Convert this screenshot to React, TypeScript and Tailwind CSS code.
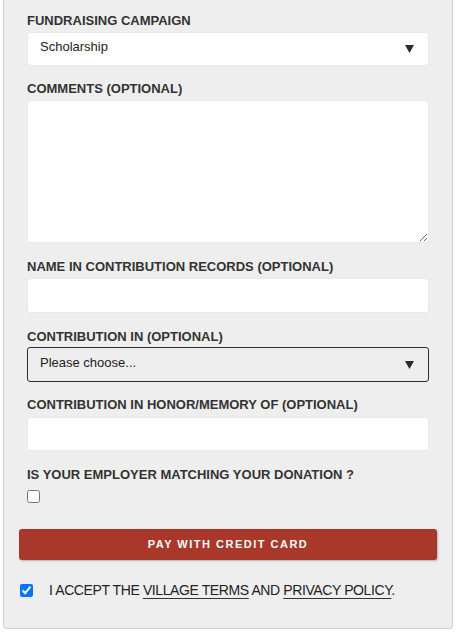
import React from "react";

const font = { fontFamily: '"Liberation Sans", Arial, Helvetica, sans-serif' };

function Arrow() {
  return (
    <svg width="9" height="8" viewBox="0 0 9 8" className="shrink-0">
      <polygon points="0,0 9,0 4.5,8" fill="#2b2b2b" />
    </svg>
  );
}

function Label({ children, className = "" }: { children: React.ReactNode; className?: string }) {
  return (
    <label className={`block text-[13px] leading-[15px] font-bold text-[#333] ${className}`}>
      {children}
    </label>
  );
}

export default function App() {
  return (
    <div className="w-[458px] h-[632px] bg-white pl-[3px] pr-[5px]" style={font}>
      <form className="flex flex-col bg-[#eeeeee] border-x border-b border-[#cfcfcf] rounded-b-[4px] px-[23px] pt-[13px] pb-[30px]">
        <Label>FUNDRAISING CAMPAIGN</Label>
        <div className="mt-[4px] h-[34px] flex items-center justify-between bg-white border border-[#e9e9e9] rounded-[3px] pl-[12px] pr-[14px]">
          <span className="mb-[4px] text-[13px] text-[#222]">Scholarship</span>
          <Arrow />
        </div>

        <Label className="mt-[15px]">COMMENTS (OPTIONAL)</Label>
        <textarea className="mt-[4px] h-[143px] w-full bg-white border border-[#e9e9e9] rounded-[3px] outline-none text-[13px] p-2 block" />

        <Label className="mt-[16px]">NAME IN CONTRIBUTION RECORDS (OPTIONAL)</Label>
        <input type="text" className="mt-[4px] h-[35px] w-full bg-white border border-[#e9e9e9] rounded-[3px] outline-none text-[13px] px-3 block" />

        <Label className="mt-[16px]">CONTRIBUTION IN (OPTIONAL)</Label>
        <div className="mt-[3px] h-[35px] flex items-center justify-between border border-[#2f2f2f] rounded-[3px] pl-[12px] pr-[14px]">
          <span className="mb-[4px] text-[13px] text-[#222]">Please choose...</span>
          <Arrow />
        </div>

        <Label className="mt-[15px]">CONTRIBUTION IN HONOR/MEMORY OF (OPTIONAL)</Label>
        <input type="text" className="mt-[5px] h-[34px] w-full bg-white border border-[#e9e9e9] rounded-[3px] outline-none text-[13px] px-3 block" />

        <Label className="mt-[16px]">IS YOUR EMPLOYER MATCHING YOUR DONATION ?</Label>
        <input type="checkbox" className="mt-[8px] m-0 w-[13px] h-[13px] block" />

        <button
          type="button"
          className="mt-[26px] -mx-[8px] h-[31px] bg-[#a9382a] rounded-[3px] shadow-[1px_1px_2px_rgba(0,0,0,0.25)] text-white text-[11px] font-bold tracking-[1.5px]"
        >
          PAY WITH CREDIT CARD
        </button>

        <div className="mt-[23px] -ml-[7px] flex items-center gap-[16px]">
          <input type="checkbox" defaultChecked className="m-0 w-[13px] h-[13px] block" />
          <span className="text-[14px] leading-[15px] tracking-[-0.4px] text-[#222]">
            I ACCEPT THE{" "}
            <a className="underline underline-offset-[3px] decoration-[#333]">VILLAGE TERMS</a>{" "}
            AND{" "}
            <a className="underline underline-offset-[3px] decoration-[#333]">PRIVACY POLICY</a>.
          </span>
        </div>
      </form>
    </div>
  );
}
